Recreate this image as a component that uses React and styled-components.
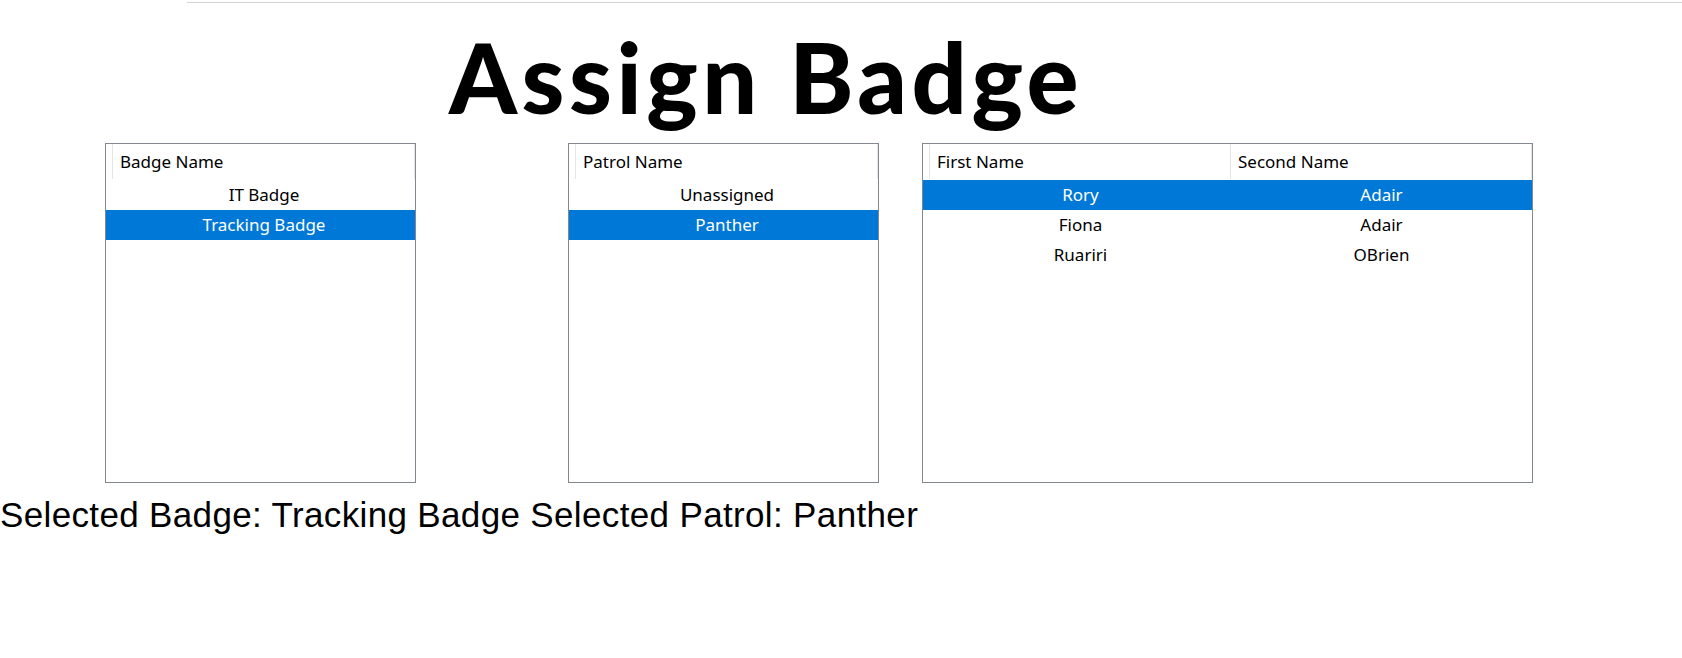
import React from 'react';
import styled, { createGlobalStyle } from 'styled-components';

const GlobalStyle = createGlobalStyle`
  body {
    margin: 0;
    background: #ffffff;
    font-family: "Noto Sans", "Open Sans", sans-serif;
  }
`;

const badges = ['IT Badge', 'Tracking Badge'];
const patrols = ['Unassigned', 'Panther'];
const members = [
  { first: 'Rory', second: 'Adair' },
  { first: 'Fiona', second: 'Adair' },
  { first: 'Ruariri', second: 'OBrien' },
];

const ListView = ({ width, offset, columns, rows, selected }) => (
  <Box width={width} offset={offset}>
    <HeaderRow>
      <Spacer />
      {columns.map(col => (
        <HeaderCell key={col}>{col}</HeaderCell>
      ))}
    </HeaderRow>
    {rows.map((row, i) => (
      <Row key={i} active={i === selected}>
        <Spacer />
        {row.map((cell, j) => (
          <Cell key={j}>{cell}</Cell>
        ))}
      </Row>
    ))}
  </Box>
);

const App = () => (
  <>
    <GlobalStyle />
    <TopRule />
    <Page>
      <Title>Assign Badge</Title>
      <Lists>
        <ListView
          width={311}
          offset={105}
          columns={['Badge Name']}
          rows={badges.map(b => [b])}
          selected={1}
        />
        <ListView
          width={311}
          offset={152}
          columns={['Patrol Name']}
          rows={patrols.map(p => [p])}
          selected={1}
        />
        <ListView
          width={611}
          offset={43}
          columns={['First Name', 'Second Name']}
          rows={members.map(m => [m.first, m.second])}
          selected={0}
        />
      </Lists>
      <Summary>Selected Badge: Tracking Badge Selected Patrol: Panther</Summary>
    </Page>
  </>
);

const TopRule = styled.div`
  margin: 2px 0 0 187px;
  border-top: 1px solid #d3d3d3;
`;

const Page = styled.main`
  display: flex;
  flex-direction: column;
`;

const Title = styled.h1`
  width: 1532px;
  margin: 14px 0 0;
  text-align: center;
  font-family: Lato, "Noto Sans", sans-serif;
  font-weight: 900;
  font-size: 97px;
  line-height: 120px;
  letter-spacing: 4.5px;
  color: #000;
`;

const Lists = styled.div`
  display: flex;
  align-items: flex-start;
  margin-top: 6px;
`;

const Box = styled.div`
  box-sizing: border-box;
  width: ${p => p.width}px;
  margin-left: ${p => p.offset}px;
  height: 340px;
  border: 1px solid #828790;
  background: #fff;
  display: flex;
  flex-direction: column;
`;

const HeaderRow = styled.div`
  display: flex;
  height: 35px;
  margin-bottom: 1px;
`;

const Spacer = styled.div`
  width: 6px;
  flex: none;
  border-right: 1px solid #e5e5e5;
`;

const HeaderCell = styled.div`
  flex: 1;
  display: flex;
  align-items: center;
  padding-left: 7px;
  border-right: 1px solid #e5e5e5;
  font-size: 17px;
  color: #000;
`;

const Row = styled.div`
  display: flex;
  height: 30px;
  padding-bottom: 1px;
  box-sizing: border-box;
  background: ${p => (p.active ? '#0078d7' : 'transparent')};
  color: ${p => (p.active ? '#fff' : '#000')};

  & > ${Spacer} {
    border-right-color: transparent;
  }
`;

const Cell = styled.div`
  flex: 1;
  display: flex;
  align-items: center;
  justify-content: center;
  font-size: 17px;
`;

const Summary = styled.p`
  margin: 12px 0 0;
  font-family: "Liberation Sans", Arial, sans-serif;
  font-size: 35px;
  line-height: 40px;
  letter-spacing: 0.35px;
  color: #000;
`;

export default App;
